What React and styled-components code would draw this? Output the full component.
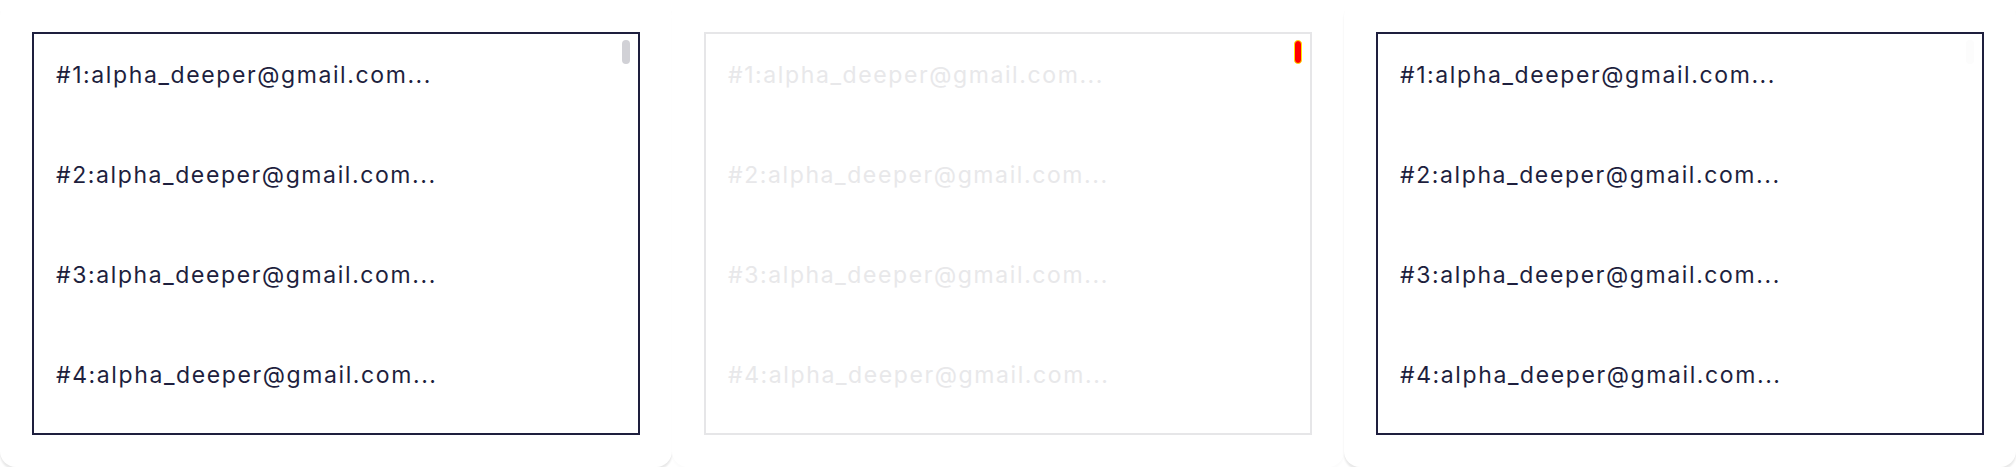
import React from 'react'
import styled, { createGlobalStyle } from 'styled-components'

const GlobalStyle = createGlobalStyle`
  html, body {
    margin: 0;
    padding: 0;
    background: #ffffff;
  }
  * {
    box-sizing: border-box;
  }
`

const Row = styled.div`
  display: flex;
  flex-direction: row;
  width: 2016px;
`

const Panel = styled.div`
  width: 672px;
  height: 467px;
  padding: 32px;
  background: #ffffff;
  border-radius: 16px;
  box-shadow: ${p => (p.$muted ? '0 3px 2px rgba(0, 0, 0, 0.015)' : '0 3px 2px rgba(0, 0, 0, 0.09)')};
`

const ListBox = styled.div`
  position: relative;
  height: 403px;
  border: 2px solid ${p => (p.$muted ? '#e6e6e8' : '#1e1f3e')};
  background: #ffffff;
  overflow: hidden;
`

const Item = styled.div`
  height: 100px;
  padding: 25px 22px 0;
  font-family: Inter, 'Liberation Sans', sans-serif;
  font-size: 23px;
  line-height: 32px;
  letter-spacing: 1.6px;
  color: ${p => (p.$muted ? '#e8e8ea' : '#1e1f3e')};
  white-space: nowrap;
`

const Thumb = styled.div`
  position: absolute;
  top: 6px;
  right: 8px;
  width: 8px;
  height: 24px;
  border-radius: 4px;
  background: ${p => p.$color};
  border: ${p => (p.$outline ? `1px solid ${p.$outline}` : 'none')};
`

const emails = [1, 2, 3, 4].map(n => `#${n}:alpha_deeper@gmail.com...`)

const EmailList = ({ muted, thumb, outline }) => (
  <ListBox $muted={muted}>
    {emails.map(e => (
      <Item key={e} $muted={muted}>{e}</Item>
    ))}
    <Thumb $color={thumb} $outline={outline} />
  </ListBox>
)

const App = () => {
  return (
    <>
      <GlobalStyle />
      <Row>
        <Panel>
          <EmailList thumb="#d1d1d6" />
        </Panel>
        <Panel $muted>
          <EmailList muted thumb="#ff0000" outline="#ffe600" />
        </Panel>
        <Panel>
          <EmailList thumb="#fcfcfc" />
        </Panel>
      </Row>
    </>
  )
}

export default App
